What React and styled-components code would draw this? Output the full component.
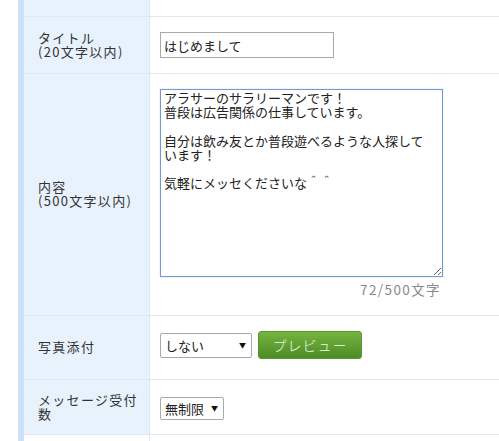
import React from 'react';
import styled, { createGlobalStyle } from 'styled-components';

const GlobalStyle = createGlobalStyle`
  body {
    margin: 0;
    background: #fff;
    font-family: "Noto Sans CJK JP", "Noto Sans", sans-serif;
    color: #333;
  }
`;

const Form = styled.div`
  margin-left: 18px;
  border-left: 6px solid #cde2fa;
  width: 475px;
`;

const Row = styled.div`
  display: grid;
  grid-template-columns: 126px 1fr;
  height: ${(p) => p.h}px;
  border-bottom: 1px solid #dce8f3;
`;

const Label = styled.div`
  display: flex;
  align-items: center;
  background: ${(p) => (p.blank ? '#fff' : '#e8f2fd')};
  border-right: 1px solid #dce8f3;
  padding: 0 10px 1px 14px;
  font-size: 13px;
  line-height: 14px;
  letter-spacing: 1.3px;
  color: #333;
`;

const Value = styled.div`
  padding: 15px 10px 0;
  display: flex;
  flex-direction: column;
  align-items: flex-start;
`;

const Inline = styled.div`
  display: flex;
  align-items: center;
  gap: 6px;
`;

const TextInput = styled.input`
  box-sizing: border-box;
  width: 174px;
  height: 26px;
  border: 1px solid #a9a9a9;
  padding: 0 3px;
  font: 13px "Noto Sans CJK JP", sans-serif;
  color: #222;
  outline: none;
`;

const TextArea = styled.textarea`
  box-sizing: border-box;
  width: 283px;
  height: 188px;
  border: 1px solid #7398d8;
  box-shadow: 0 0 1px #a8c2ec;
  padding: 1px 14px 2px 3px;
  font: 13px/14.2px "Noto Sans CJK JP", sans-serif;
  color: #222;
  outline: none;
  resize: both;
  margin: 0;
`;

const Counter = styled.div`
  width: 281px;
  text-align: right;
  margin-top: 2px;
  font-size: 13.5px;
  letter-spacing: 1.4px;
  color: #888;
`;

const SelectWrap = styled.div`
  position: relative;
  &::after {
    content: '▼';
    position: absolute;
    right: 6px;
    top: 50%;
    transform: translateY(-50%);
    font-size: 7px;
    color: #111;
    pointer-events: none;
  }
`;

const Select = styled.select`
  appearance: none;
  box-sizing: border-box;
  width: ${(p) => p.w}px;
  height: ${(p) => p.h}px;
  margin-top: ${(p) => p.top || 0}px;
  border: 1px solid #a9a9a9;
  border-radius: 2px;
  background: #fff;
  padding: 0 0 0 4px;
  font: 13px "Noto Sans CJK JP", sans-serif;
  color: #222;
  outline: none;
`;

const PreviewButton = styled.button`
  box-sizing: border-box;
  width: 104px;
  height: 28px;
  border: 1px solid #5b972f;
  border-radius: 3px;
  background: linear-gradient(#74b43f, #4e8c25);
  color: #eef8e4;
  font: 300 14px "Noto Sans CJK JP", sans-serif;
  letter-spacing: 1px;
  cursor: pointer;
`;

const body =
  'アラサーのサラリーマンです！\n普段は広告関係の仕事しています。\n\n自分は飲み友とか普段遊べるような人探しています！\n\n気軽にメッセくださいな＾＾';

export default function App() {
  return (
    <>
      <GlobalStyle />
      <Form>
        <Row h={16}>
          <Label />
          <Value />
        </Row>
        <Row h={56}>
          <Label>
            タイトル
            <br />
            (20文字以内)
          </Label>
          <Value>
            <TextInput defaultValue="はじめまして" />
          </Value>
        </Row>
        <Row h={241}>
          <Label>
            内容
            <br />
            (500文字以内)
          </Label>
          <Value>
            <TextArea defaultValue={body} />
            <Counter>72/500文字</Counter>
          </Value>
        </Row>
        <Row h={63}>
          <Label>写真添付</Label>
          <Value>
            <Inline>
              <SelectWrap>
                <Select w={92} h={25} defaultValue="no">
                  <option value="no">しない</option>
                  <option value="yes">する</option>
                </Select>
              </SelectWrap>
              <PreviewButton>プレビュー</PreviewButton>
            </Inline>
          </Value>
        </Row>
        <Row h={54}>
          <Label>メッセージ受付数</Label>
          <Value>
            <SelectWrap>
              <Select w={64} h={23} top={1} defaultValue="none">
                <option value="none">無制限</option>
              </Select>
            </SelectWrap>
          </Value>
        </Row>
        <Row h={20}>
          <Label blank />
          <Value />
        </Row>
      </Form>
    </>
  );
}
